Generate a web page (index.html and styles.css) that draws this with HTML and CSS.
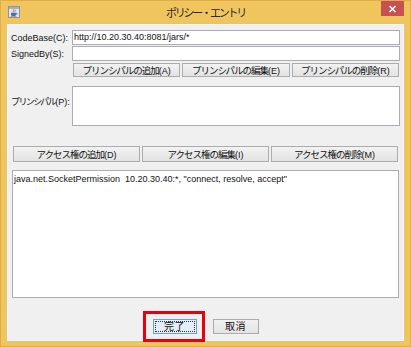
FILE: index.html
```html
<!DOCTYPE html>
<html lang="ja">
<head>
<meta charset="utf-8">
<title>ポリシー・エントリ</title>
<link rel="stylesheet" href="styles.css">
</head>
<body>
<div class="window">
  <div class="titlebar">
    <div class="tb-left">
      <svg class="app-icon" width="12" height="12" viewBox="0 0 12 12">
        <rect x="0.5" y="0.5" width="11" height="11" fill="#dfe6ee" stroke="#8d96a0"/>
        <rect x="1" y="1" width="10" height="2" fill="#9fb3c8"/>
        <path d="M5.5 3.5c1 1-1 1.5 0 2.5M7 3.8c.8.8-.8 1.2 0 2" stroke="#d8452b" stroke-width="0.8" fill="none"/>
        <path d="M3 6.8h5v1.6c0 1-1 1.6-2.5 1.6S3 9.4 3 8.4z" fill="#3f6fb6"/>
        <path d="M8 7.2h.8c.7 0 .7 1.2 0 1.2H8" stroke="#3f6fb6" stroke-width="0.7" fill="none"/>
        <rect x="2.5" y="10" width="6" height="0.8" fill="#e07a2c"/>
      </svg>
    </div>
    <div class="title jp">ポリシー・エントリ</div>
    <div class="tb-right">
      <div class="close">
        <svg width="9" height="8" viewBox="0 0 9 8"><path d="M1.5 1l6 6M7.5 1l-6 6" stroke="#fff" stroke-width="1.6"/></svg>
      </div>
    </div>
  </div>
  <div class="content">
    <div class="form">
      <label class="label">CodeBase(C):</label>
      <div class="field">http://10.20.30.40:8081/jars/*</div>
      <label class="label">SignedBy(S):</label>
      <div class="field"></div>
      <div></div>
      <div class="btn-row principal-btns">
        <button class="btn"><span class="jp">プリンシパルの追加</span>(A)</button>
        <button class="btn"><span class="jp">プリンシパルの編集</span>(E)</button>
        <button class="btn"><span class="jp">プリンシパルの削除</span>(R)</button>
      </div>
      <label class="label principal-label"><span class="jp">プリンシパル</span>(P):</label>
      <div class="field principal-list"></div>
    </div>
    <div class="btn-row perm-btns">
      <button class="btn"><span class="jp">アクセス権の追加</span>(D)</button>
      <button class="btn"><span class="jp">アクセス権の編集</span>(I)</button>
      <button class="btn"><span class="jp">アクセス権の削除</span>(M)</button>
    </div>
    <div class="perm-list">
      <div class="perm-item">java.net.SocketPermission  10.20.30.40:*, "connect, resolve, accept"</div>
    </div>
    <div class="footer">
      <div class="ok-wrap">
        <button class="btn ok"><span class="jp">完了</span></button>
        <div class="highlight"></div>
      </div>
      <button class="btn cancel"><span class="jp">取消</span></button>
    </div>
  </div>
</div>
</body>
</html>
```

FILE: styles.css
```css
html, body {
  margin: 0;
  padding: 0;
}
body {
  width: 411px;
  height: 347px;
  overflow: hidden;
  font-family: "Liberation Sans", "Noto Sans CJK JP", sans-serif;
  font-size: 9px;
  color: #111;
}
.jp {
  font-family: "Noto Sans CJK JP", sans-serif;
  font-size: 9.5px;
  letter-spacing: -1px;
}
.window {
  box-sizing: border-box;
  width: 411px;
  height: 347px;
  display: flex;
  flex-direction: column;
  padding: 0 7px 6px 7px;
  background: #f1c55e;
  box-shadow: inset 0 0 0 1px #dfae4a;
}
.titlebar {
  height: 24px;
  flex: none;
  display: grid;
  grid-template-columns: 1fr auto 1fr;
  align-items: start;
}
.tb-left {
  padding: 6px 0 0 1px;
}
.app-icon {
  display: block;
}
.title {
  font-size: 11px;
  letter-spacing: -2.2px;
  line-height: 13px;
  padding-top: 6px;
  color: #2a2a2a;
}
.tb-right {
  display: flex;
  justify-content: flex-end;
  padding-top: 1px;
}
.close {
  width: 23px;
  height: 15px;
  background: #c75050;
  display: flex;
  align-items: center;
  justify-content: center;
}
.close svg {
  display: block;
}
.content {
  flex: 1;
  min-height: 0;
  box-sizing: border-box;
  background: #f0f0f0;
  border: 1px solid #f8f8f8;
  outline: 1px solid #e3c27a;
  padding: 5px 3px 6px 3px;
  display: flex;
  flex-direction: column;
}
.form {
  display: grid;
  grid-template-columns: 61px 1fr;
  align-items: center;
}
.label {
  line-height: 12px;
  white-space: nowrap;
}
.principal-label .jp {
  font-size: 9px;
  letter-spacing: -1.6px;
}
.field {
  box-sizing: border-box;
  height: 15px;
  background: #fff;
  border: 1px solid #abadb3;
  padding: 0 1px;
  line-height: 13px;
  white-space: nowrap;
  overflow: hidden;
  margin-bottom: 1px;
}
.btn-row {
  display: grid;
  grid-template-columns: 1fr 1fr 1fr;
  gap: 2px;
}
.principal-btns {
  margin: 1px 1px 0 1px;
  height: 14px;
}
.btn {
  box-sizing: border-box;
  font-family: inherit;
  font-size: 9px;
  color: #111;
  padding: 0;
  margin: 0;
  line-height: 12px;
  border: 1px solid #acacac;
  background: linear-gradient(#f2f2f2, #e3e3e3);
  white-space: nowrap;
  overflow: hidden;
}
.principal-list {
  height: 40px;
  margin-top: 9px;
  margin-bottom: 0;
}
.perm-btns {
  margin: 20px 2px 0 2px;
  height: 16px;
}
.perm-list {
  flex: 1;
  min-height: 0;
  box-sizing: border-box;
  margin: 8px 1px 0 1px;
  background: #fff;
  border: 1px solid #abadb3;
  padding: 2px 1px;
}
.perm-item {
  white-space: pre;
  line-height: 12px;
}
.footer {
  margin-top: 21px;
  height: 15px;
  display: flex;
  justify-content: center;
  gap: 16px;
}
.ok-wrap {
  position: relative;
  display: flex;
}
.ok {
  width: 44px;
  height: 15px;
  background: #e3eef8;
  border: 1px solid #6f9fcf;
  outline: 1px dotted #333;
  outline-offset: -3px;
}
.ok .jp, .cancel .jp {
  font-size: 10px;
  letter-spacing: 0.5px;
}
.cancel {
  width: 46px;
  height: 15px;
}
.highlight {
  position: absolute;
  left: -10px;
  right: -8px;
  top: -8px;
  bottom: -8px;
  border: 3px solid #e8000e;
  pointer-events: none;
}
```
